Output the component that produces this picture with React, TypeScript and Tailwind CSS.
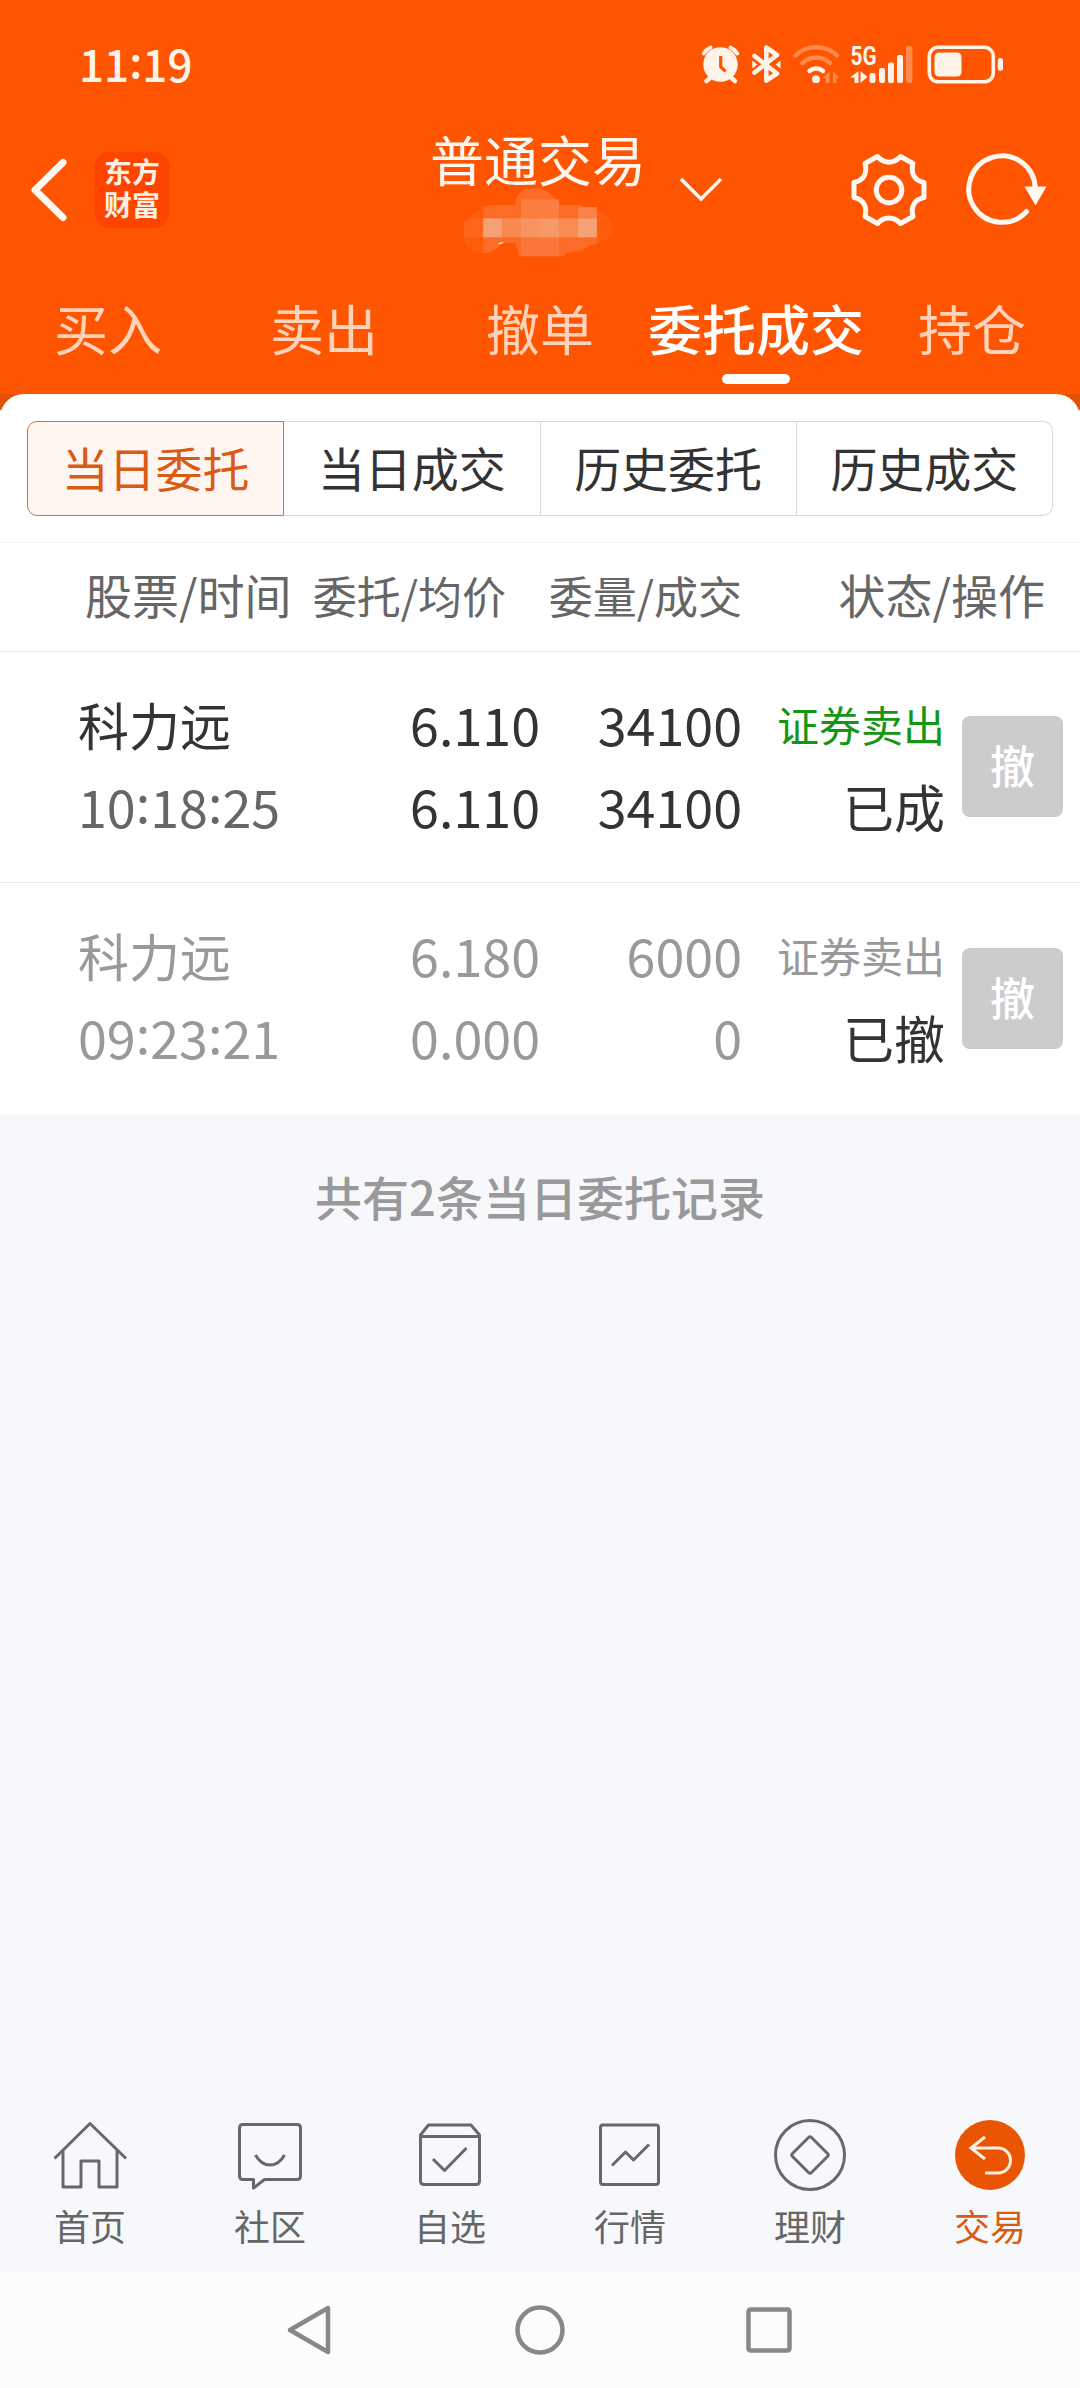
import React from 'react';
import clsx from 'clsx';

interface Order {
  name: string;
  time: string;
  price: string;
  avgPrice: string;
  amount: string;
  filled: string;
  side: string;
  status: string;
  cancelled: boolean;
}

const mainTabs = ['买入', '卖出', '撤单', '委托成交', '持仓'];
const subTabs = ['当日委托', '当日成交', '历史委托', '历史成交'];

const orders: Order[] = [
  {
    name: '科力远',
    time: '10:18:25',
    price: '6.110',
    avgPrice: '6.110',
    amount: '34100',
    filled: '34100',
    side: '证券卖出',
    status: '已成',
    cancelled: false,
  },
  {
    name: '科力远',
    time: '09:23:21',
    price: '6.180',
    avgPrice: '0.000',
    amount: '6000',
    filled: '0',
    side: '证券卖出',
    status: '已撤',
    cancelled: true,
  },
];

const StatusIcons = () => (
  <svg className="w-[310px] h-[50px]" viewBox="0 0 310 50" fill="none">
    {/* alarm */}
    <g stroke="#fff3ea" strokeLinecap="round">
      <circle cx="20.5" cy="24.5" r="17.3" fill="#fff3ea" stroke="none" />
      <path d="M3.8 13.5 A16 16 0 0 1 10.5 7.5 M30.5 7.5 A16 16 0 0 1 37.2 13.5" strokeWidth="4" />
      <path d="M10 38 L6.5 41 M31.5 38 L35 41" strokeWidth="4.5" />
      <path d="M20.7 16 V26.5 L25.5 31.5" stroke="#ff5500" strokeWidth="3.2" strokeLinecap="butt" />
    </g>
    {/* bluetooth */}
    <path d="M54.5 16 L77 33.5 L66.3 40.5 V7.5 L77 15 L54.5 32.5" stroke="#fff3ea" strokeWidth="4.6" strokeLinejoin="round" strokeLinecap="round" />
    <path d="M52.3 20.5 L57.5 24.5 L52.3 28.5 Z M80.5 20.5 L75.5 24.5 L80.5 28.5 Z" fill="#fff3ea" />
    {/* wifi */}
    <g strokeWidth="4.4" strokeLinecap="round">
      <path d="M95.5 15.5 A30 30 0 0 1 137 15.5" stroke="#ff8a4d" />
      <path d="M102.5 23 A20 20 0 0 1 130 23" stroke="#ff8a4d" />
      <path d="M109.5 31 A10.5 10.5 0 0 1 123 31" stroke="#fff3ea" />
    </g>
    <circle cx="116" cy="39.2" r="3.9" fill="#fff3ea" />
    <path d="M129.5 31 V43 H126 V38.5 H122.5 Z M133 43 V31 L139.5 38 H136.5 V43 Z" fill="#ff8a4d" />
    {/* signal */}
    <path d="M158.5 31 V43 H154.5 V37.5 H150 Z M160.5 43 V31 L167.5 37 L163.8 40 Z" fill="#fff3ea" />
    <g fill="#fff3ea">
      <rect x="169.5" y="33" width="6" height="10" rx="2" />
      <rect x="179" y="28" width="6" height="15" rx="2" />
      <rect x="188" y="22.5" width="6" height="20.5" rx="2" />
      <rect x="197" y="15" width="6" height="28" rx="2" />
    </g>
    <rect x="206" y="6" width="6.4" height="37" rx="2" fill="#ff8a4d" />
    {/* battery */}
    <rect x="229.3" y="7.3" width="64" height="34.5" rx="9" stroke="#fff3ea" strokeWidth="3.6" />
    <rect x="234.5" y="12.5" width="27" height="24" rx="4.5" fill="#fff3ea" />
    <rect x="297.8" y="18" width="5.2" height="13" rx="2.4" fill="#fff3ea" />
    <text x="150.5" y="24.5" fontSize="25.5" fontWeight="700" textLength="26" lengthAdjust="spacingAndGlyphs" fill="#fff3ea" className="font-['Roboto',sans-serif]">
      5G
    </text>
  </svg>
);

const GearIcon = () => (
  <svg className="w-[76px] h-[76px]" viewBox="0 0 76 76" fill="none" stroke="#fff8f2" strokeWidth="5" strokeLinejoin="round">
    <path d="M26.5 4.5 C33 12 43 12 49.5 4.5 L62 11.5 C59.5 21 63 28.5 73 30.5 V45.5 C63 47.5 59.5 55 62 64.5 L49.5 71.5 C43 64 33 64 26.5 71.5 L14 64.5 C16.5 55 13 47.5 3 45.5 V30.5 C13 28.5 16.5 21 14 11.5 Z" />
    <circle cx="38" cy="38" r="12.8" />
  </svg>
);

const RefreshIcon = () => (
  <svg className="w-[82px] h-[76px]" viewBox="0 0 82 76" fill="none">
    <path d="M60.5 59.5 A33.2 33.2 0 1 1 69.2 36" stroke="#fff8f2" strokeWidth="5" strokeLinecap="round" />
    <path d="M58.5 34.5 H80.5 L69.5 53.5 Z" fill="#fff8f2" />
  </svg>
);

// Pixelated patch that hides the account number
const AccountMask = () => (
  <svg className="ml-[4px] w-[160px] h-[76px]" viewBox="0 0 160 76">
    <path d="M0 52 Q0 60 6 64 Q12 69 20 69 Q30 69 38 58 H54 L58 72 H106 L108 69 Q128 68 136 60 Q156 54 157 42 Q156 30 140 23 H128 L120 18 H102 Q94 8 86 2 Q72 -3 60 8 Q54 13 54 18 H30 Q10 24 0 36 Z" fill="#ff5d0c" />
    <path d="M20 20 L30 18 H54 Q54 1 73 0 Q88 0 96 12 Q98 16 102 18 H122 L128 20 H140 V60 H133 Q124 67 106 69 V72 H58 L54 58 H40 Q32 69 20 69 Z" fill="#fc6c26" />
    <rect x="60" y="12" width="40" height="20" fill="#fb7d40" />
    <rect x="60" y="52" width="40" height="20" fill="#fb7638" />
    <path d="M0 52 V36 L5 32 H20 V52 Z" fill="#ff661b" />
    <rect x="20" y="32" width="20" height="20" fill="#f6a076" />
    <rect x="40" y="32" width="20" height="20" fill="#f88a50" />
    <rect x="60" y="32" width="20" height="20" fill="#f7945f" />
    <rect x="80" y="32" width="20" height="20" fill="#f79967" />
    <rect x="100" y="32" width="20" height="20" fill="#f88b52" />
    <rect x="120" y="20" width="20" height="12" fill="#fa8248" />
    <rect x="120" y="32" width="20" height="20" fill="#f6a177" />
    <path d="M36 59 L41 57.5" stroke="#ffd9c2" strokeWidth="1.5" />
  </svg>
);

const HomeIcon = () => (
  <svg className="w-[80px] h-[80px]" viewBox="0 0 80 80" fill="none" stroke="#686868" strokeWidth="3" strokeLinejoin="round">
    <path d="M4.5 43.5 L40 8.5 L76 43.5" />
    <path d="M13 36 V72 H31 V46 H49 V72 H67 V36" />
  </svg>
);

const CommunityIcon = () => (
  <svg className="w-[80px] h-[80px]" viewBox="0 0 80 80" fill="none" stroke="#686868" strokeWidth="3" strokeLinejoin="round">
    <path d="M13 9.5 H67 Q70.5 9.5 70.5 13 V61 Q70.5 64.5 67 64.5 H34.5 L23.5 73 V64.5 H13 Q9.5 64.5 9.5 61 V13 Q9.5 9.5 13 9.5 Z" />
    <path d="M25.5 40 Q31 50 40 50 Q49 50 54.5 40" />
  </svg>
);

const WatchlistIcon = () => (
  <svg className="w-[80px] h-[80px]" viewBox="0 0 80 80" fill="none" stroke="#686868" strokeWidth="3" strokeLinejoin="round">
    <path d="M10.5 20 L18.5 10 H61 L69.5 20 V66 Q69.5 69.5 66 69.5 H14 Q10.5 69.5 10.5 66 Z M10.5 21.5 H69.5" />
    <path d="M23 44 L34.5 55.5 L56.5 33" />
  </svg>
);

const QuoteIcon = () => (
  <svg className="w-[80px] h-[80px]" viewBox="0 0 80 80" fill="none" stroke="#686868" strokeWidth="3" strokeLinejoin="round">
    <rect x="10.5" y="10" width="58" height="59.5" rx="2.5" />
    <path d="M22 50.5 L35.5 37 L43.5 45 L59 29.5" />
  </svg>
);

const WealthIcon = () => (
  <svg className="w-[80px] h-[80px]" viewBox="0 0 80 80" fill="none" stroke="#686868" strokeWidth="3" strokeLinejoin="round">
    <circle cx="40" cy="40" r="34.5" />
    <path d="M38.5 22.5 Q40 21 41.5 22.5 L57.5 38.5 Q59 40 57.5 41.5 L41.5 57.5 Q40 59 38.5 57.5 L22.5 41.5 Q21 40 22.5 38.5 Z" />
  </svg>
);

const TradeIcon = () => (
  <svg className="w-[80px] h-[80px]" viewBox="0 0 80 80" fill="none" stroke="#ffeee2" strokeWidth="3">
    <circle cx="40" cy="40" r="35" fill="#ea5504" stroke="none" />
    <path d="M35 22 L21 33 L35 44 M21 33 H48 A12.5 12.5 0 0 1 48 58 H35" />
  </svg>
);

const navItems = [
  { label: '首页', icon: <HomeIcon /> },
  { label: '社区', icon: <CommunityIcon /> },
  { label: '自选', icon: <WatchlistIcon /> },
  { label: '行情', icon: <QuoteIcon /> },
  { label: '理财', icon: <WealthIcon /> },
  { label: '交易', icon: <TradeIcon />, active: true },
];

const TimeText = ({ value }: { value: string }) => (
  <>
    {value.split(':').map((part, i) => (
      <React.Fragment key={i}>
        {i > 0 && <span className="relative -top-[5px]">:</span>}
        {part}
      </React.Fragment>
    ))}
  </>
);

const OrderRow = ({ order }: { order: Order }) => {
  const main = order.cancelled ? 'text-[#999999]' : 'text-[#333333]';
  return (
    <div className="flex h-[231px] items-center border-b border-[#ececec] pr-[17px] pb-[5px] text-[51px] leading-[82px] last:border-b-0">
      <div className="w-[300px] pl-[78px]">
        <div className={main}>{order.name}</div>
        <div className={clsx('text-[52px]', order.cancelled ? 'text-[#999999]' : 'text-[#666666]')}>
          <TimeText value={order.time} />
        </div>
      </div>
      <div className={clsx('w-[240px] text-right text-[52px]', main)}>
        <div>{order.price}</div>
        <div>{order.avgPrice}</div>
      </div>
      <div className={clsx('w-[202px] text-right text-[52px]', main)}>
        <div>{order.amount}</div>
        <div>{order.filled}</div>
      </div>
      <div className="flex-1 text-right">
        <div className={clsx('text-[42px]', order.cancelled ? 'text-[#999999]' : 'text-[#149614]')}>{order.side}</div>
        <div className="text-[#333333]">{order.status}</div>
      </div>
      <button className="mt-[4px] ml-[17px] h-[101px] w-[101px] rounded-lg bg-[#cccccc] pb-[4px] text-[45px] leading-[97px] font-medium text-white">
        撤
      </button>
    </div>
  );
};

export default function App() {
  return (
    <div className="flex h-[2388px] w-[1080px] flex-col overflow-hidden bg-[#f7f8fb] font-['Noto_Sans_CJK_SC',sans-serif]">
      <header className="h-[394px] bg-[#ff5500]">
        <div className="flex h-[130px] items-center justify-between pr-[70px] pl-[79px]">
          <span className="pb-[5px] text-[44px] leading-none font-medium text-[#fff3ea]">
            11<span className="relative -top-[4px]">:</span>19
          </span>
          <StatusIcons />
        </div>

        <div className="flex h-[130px] px-[30px]">
          <div className="flex w-[400px] items-center pb-[10px]">
            <svg className="h-[64px] w-[38px]" viewBox="0 0 38 64" fill="none" stroke="#fff8f2" strokeWidth="7" strokeLinecap="round" strokeLinejoin="round">
              <path d="M33 4.5 L5 32 L33 59.5" />
            </svg>
            <div className="ml-[26px] flex h-[76px] w-[76px] items-center justify-center rounded-2xl bg-[#ff4400] pb-[4px] font-bold text-[#fff0e6]">
              <p className="w-[56px] text-[28px] leading-[33px]">东方财富</p>
            </div>
          </div>
          <div className="flex w-[216px] flex-col items-center">
            <h1 className="text-[54px] leading-[58px] whitespace-nowrap text-[#fff8f2]">普通交易</h1>
            <AccountMask />
          </div>
          <svg className="mt-[47px] ml-[33px] h-[26px] w-[44px]" viewBox="0 0 44 26" fill="none" stroke="#fff8f2" strokeWidth="3.5">
            <path d="M2 2 L22 22 L42 2" />
          </svg>
          <div className="mr-[2px] ml-auto flex items-center gap-[39px] pb-[11px]">
            <GearIcon />
            <RefreshIcon />
          </div>
        </div>

        <nav className="flex h-[134px] text-[54px]">
          {mainTabs.map((tab) => (
            <div
              key={tab}
              className={clsx(
                'flex w-[216px] flex-col items-center whitespace-nowrap',
                tab === '委托成交' ? 'font-medium text-white' : 'text-[#ffd3ba]'
              )}
            >
              <span className="mt-[34px] leading-[68px]">{tab}</span>
              {tab === '委托成交' && <span className="mt-[12px] h-[10px] w-[68px] rounded-full bg-white" />}
            </div>
          ))}
        </nav>
      </header>

      <div className="bg-linear-to-b from-[#e25206] from-[16px] to-white to-[16px]">
        <div className="rounded-t-[24px] bg-white">
          <div className="flex h-[149px] border-b border-[#f5f5f5] px-[27px] pt-[27px]">
            {subTabs.map((tab, i) => (
              <button
                key={tab}
                className={clsx(
                  'h-[95px] flex-1 border pb-[4px] text-[47px] leading-[89px]',
                  i === 0 && 'rounded-l-[10px] border-[#c9743f] bg-[#fff6f2] text-[#d95b14]',
                  i > 0 && 'border-l-0 border-[#d8d8d8] text-[#333333]',
                  i === subTabs.length - 1 && 'rounded-r-[10px]'
                )}
              >
                {tab}
              </button>
            ))}
          </div>

          <div className="flex h-[109px] items-center border-b border-[#ececec] pr-[35px] pb-[5px] text-[44px] text-[#666666]">
            <div className="w-[300px] pl-[85px] text-[47px] whitespace-nowrap">股票/时间</div>
            <div className="w-[206px] text-right whitespace-nowrap">委托/均价</div>
            <div className="w-[236px] text-right whitespace-nowrap">委量/成交</div>
            <div className="flex-1 text-right text-[47px] whitespace-nowrap">状态/操作</div>
          </div>

          <div>
            {orders.map((order) => (
              <OrderRow key={order.time} order={order} />
            ))}
          </div>
        </div>
      </div>

      <p className="mt-[47px] text-center text-[47px] leading-[70px] font-medium text-[#999999]">共有2条当日委托记录</p>

      <nav className="mt-auto flex h-[157px]">
        {navItems.map((item) => (
          <div
            key={item.label}
            className={clsx('flex flex-1 flex-col items-center text-[36px]', item.active ? 'text-[#d95b14]' : 'text-[#666666]')}
          >
            {item.icon}
            <span className="mt-[5px] leading-[50px]">{item.label}</span>
          </div>
        ))}
      </nav>

      <footer className="flex h-[116px] items-center justify-center gap-[177px] bg-[#fcfcfc]">
        <svg className="h-[52px] w-[52px]" viewBox="0 0 52 52" fill="none" stroke="#888888" strokeWidth="4.5" strokeLinejoin="round">
          <path d="M43 4 L5 26 L43 48 Z" />
        </svg>
        <svg className="h-[52px] w-[52px]" viewBox="0 0 52 52" fill="none" stroke="#888888" strokeWidth="4.5">
          <circle cx="26" cy="26" r="22.5" />
        </svg>
        <svg className="h-[52px] w-[52px]" viewBox="0 0 52 52" fill="none" stroke="#888888" strokeWidth="4.5">
          <rect x="5.5" y="5.5" width="41" height="41" rx="2" />
        </svg>
      </footer>
    </div>
  );
}
